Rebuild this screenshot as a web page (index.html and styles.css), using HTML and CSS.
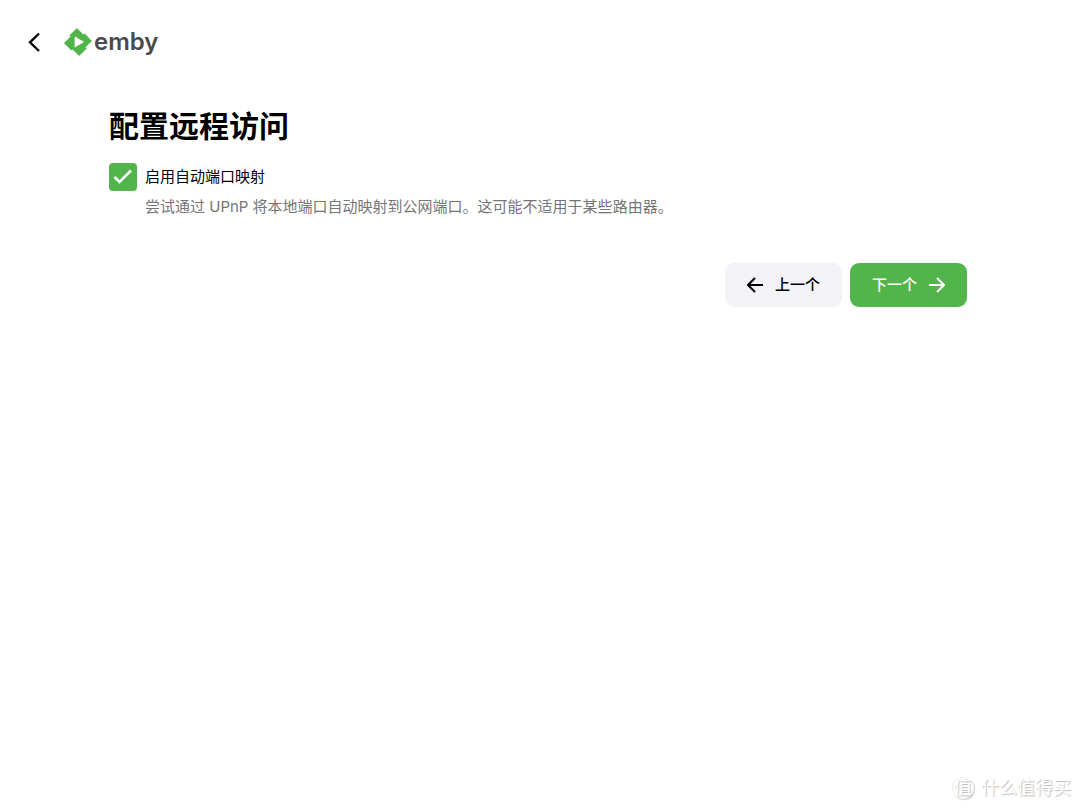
FILE: index.html
```html
<!DOCTYPE html>
<html lang="zh-CN">
  <head>
    <meta charset="UTF-8" />
    <meta name="viewport" content="width=device-width, initial-scale=1.0" />
    <title>emby</title>
    <link rel="stylesheet" href="styles.css">
  </head>
  <body>
    <header class="header">
      <button class="back" type="button" aria-label="返回">
        <svg width="24" height="24" viewBox="0 0 24 24">
          <path d="M17 3.5L8 12.3L17 21" />
        </svg>
      </button>
      <a class="logo" href="#">
        <svg width="28" height="28" viewBox="0 0 24 24">
          <path d="M11.041 0c-.007 0-1.456 1.43-3.219 3.176L4.615 6.352l.512.513.512.512-2.819 2.791L0 12.961l1.83 1.848c1.006 1.016 2.438 2.46 3.182 3.209l1.351 1.359.508-.496c.28-.273.515-.498.524-.498.008 0 1.266 1.264 2.794 2.808L12.97 24l.187-.182c.23-.225 5.007-4.95 5.717-5.656l.52-.516-.502-.513c-.276-.282-.5-.52-.496-.53.003-.009 1.264-1.26 2.802-2.783 1.538-1.522 2.8-2.776 2.803-2.785.005-.012-3.617-3.684-6.107-6.193L17.65 4.6l-.505.505c-.279.278-.517.501-.53.497-.013-.005-1.27-1.267-2.793-2.805A449.655 449.655 0 0011.041 0zM9.223 7.367c.091.038 7.951 4.608 7.957 4.627.003.013-1.781 1.056-3.965 2.32a999.898 999.898 0 01-3.996 2.307c-.019.006-.026-1.266-.026-4.629 0-3.7.007-4.634.03-4.625Z" />
        </svg>
        <span>emby</span>
      </a>
    </header>

    <main class="wizard">
      <h1>配置远程访问</h1>
      <form>
        <div class="option">
          <span class="check">
            <input type="checkbox" id="upnp" aria-describedby="upnp-desc" checked />
            <svg width="28" height="28" viewBox="0 0 28 28">
              <path d="M5.5 14L10.5 19L22 7.5" />
            </svg>
          </span>
          <label for="upnp">启用自动端口映射</label>
        </div>
        <p id="upnp-desc" class="desc">尝试通过 UPnP 将本地端口自动映射到公网端口。这可能不适用于某些路由器。</p>
        <div class="buttons">
          <button class="btn" type="button">
            <svg width="16" height="16" viewBox="0 0 16 16">
              <path d="M16 8H2M8 1L1 8L8 15" />
            </svg>
            上一个
          </button>
          <button class="btn next" type="submit">
            下一个
            <svg width="16" height="16" viewBox="0 0 16 16">
              <path d="M0 8H14M8 1L15 8L8 15" />
            </svg>
          </button>
        </div>
      </form>
    </main>

    <footer class="mark">
      <span class="badge">值</span>
      <span>什么值得买</span>
    </footer>
  </body>
</html>
```

FILE: styles.css
```css
* {
  padding: 0;
  margin: 0;
  box-sizing: border-box;
}
body {
  display: flex;
  flex-direction: column;
  min-height: 100vh;
  background-color: #fff;
  color: #000;
  font-family: Inter, "Noto Sans CJK SC", sans-serif;
  font-size: 15px;
}
button {
  border: none;
  font: inherit;
  cursor: pointer;
}
.header {
  display: flex;
  align-items: center;
  gap: 16px;
  padding: 24px 20px;
}
.back {
  display: flex;
  padding: 2px;
  background: none;
}
.back path {
  fill: none;
  stroke: #000;
  stroke-width: 2.4;
}
.logo {
  display: flex;
  align-items: center;
  gap: 2px;
  height: 36px;
  color: #4a4a4c;
  font-family: Inter, sans-serif;
  font-size: 24px;
  font-weight: 600;
  line-height: 32px;
  text-decoration: none;
}
.logo svg {
  fill: #52b54b;
}

.wizard {
  flex: 1;
  padding: 20px 113px 20px 109px;
}
h1 {
  font-size: 30px;
  font-weight: 600;
  line-height: 44px;
}
.option {
  display: flex;
  align-items: center;
  gap: 8px;
  margin-top: 15px;
}
.check {
  display: grid;
}
.check > * {
  grid-area: 1 / 1;
}
.check input {
  appearance: none;
  width: 28px;
  height: 28px;
  border: 2px solid #52b54b;
  border-radius: 4px;
}
.check input:checked {
  background-color: #52b54b;
}
.check svg {
  pointer-events: none;
}
.check path {
  fill: none;
  stroke: #fff;
  stroke-width: 2.6;
}
.check input:not(:checked) + svg {
  display: none;
}
.option label {
  line-height: 20px;
}
.desc {
  padding: 4px 0 0 36px;
  color: #757575;
  line-height: 24px;
}

.buttons {
  display: flex;
  justify-content: flex-end;
  gap: 8px;
  margin-top: 44px;
}
.btn {
  display: flex;
  justify-content: center;
  align-items: center;
  gap: 12px;
  width: 117px;
  height: 44px;
  border-radius: 9px;
  background-color: #f2f2f7;
  color: #000;
  font-weight: 500;
  line-height: 20px;
}
.btn path {
  fill: none;
  stroke: currentColor;
  stroke-width: 2;
}
.next {
  background-color: #52b54b;
  color: #fff;
}

.mark {
  display: flex;
  justify-content: flex-end;
  align-items: center;
  gap: 7px;
  padding: 9px;
  color: #fff;
  font-size: 18px;
  line-height: 26px;
  text-shadow: 1px 1px 1px #bbb;
}
.badge {
  display: flex;
  justify-content: center;
  align-items: center;
  width: 22px;
  height: 22px;
  border: 1px solid #eee;
  border-radius: 50%;
  box-shadow: 1px 1px 1px #ccc;
}
```
